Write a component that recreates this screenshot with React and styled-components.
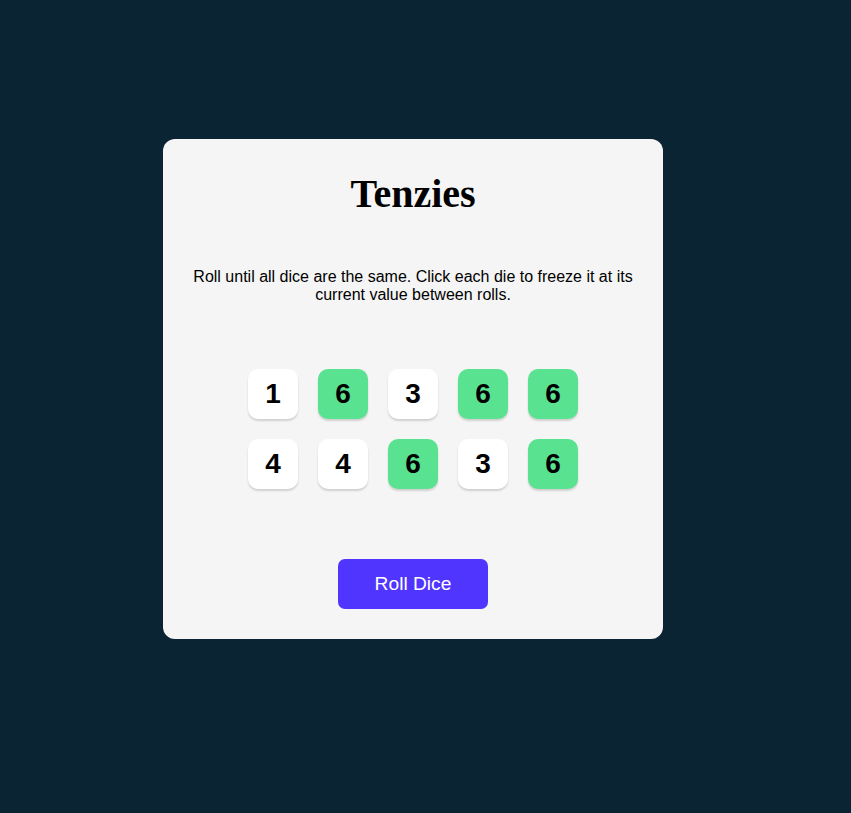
import React, { useState } from "react";
import styled, { createGlobalStyle } from "styled-components";

const GlobalStyle = createGlobalStyle`
  body {
    margin: 0;
    background: #0b2434;
    font-family: "Liberation Sans", Arial, sans-serif;
  }
`;

const Page = styled.div`
  min-height: 100vh;
  padding: 139px 0 0 163px;
  box-sizing: border-box;
`;

const Card = styled.main`
  width: 500px;
  height: 500px;
  box-sizing: border-box;
  background: #f5f5f5;
  border-radius: 12px;
  padding: 31px 30px 30px;
  display: flex;
  flex-direction: column;
  align-items: center;
`;

const Title = styled.h1`
  margin: 0;
  font-family: "Liberation Serif", "Times New Roman", serif;
  font-size: 40px;
  font-weight: 700;
  color: #000;
`;

const Instructions = styled.p`
  margin: 51px 0 0;
  font-size: 16px;
  line-height: 18px;
  text-align: center;
  color: #000;
`;

const DiceGrid = styled.div`
  margin-top: 65px;
  display: grid;
  grid-template-columns: repeat(5, 50px);
  gap: 20px;
`;

const Die = styled.div`
  width: 50px;
  height: 50px;
  border-radius: 10px;
  background: ${(p) => (p.$held ? "#59e391" : "#ffffff")};
  box-shadow: 0 2px 2px rgba(0, 0, 0, 0.15);
  display: flex;
  align-items: center;
  justify-content: center;
  font-size: 28px;
  font-weight: 700;
  color: #000;
  cursor: pointer;
  user-select: none;
`;

const RollButton = styled.button`
  margin-top: 70px;
  width: 150px;
  height: 50px;
  border: none;
  border-radius: 7px;
  background: #5035ff;
  color: #fff;
  font-family: "Liberation Sans", Arial, sans-serif;
  font-size: 19.2px;
  cursor: pointer;
`;

const initialDice = [
  { value: 1, held: false },
  { value: 6, held: true },
  { value: 3, held: false },
  { value: 6, held: true },
  { value: 6, held: true },
  { value: 4, held: false },
  { value: 4, held: false },
  { value: 6, held: true },
  { value: 3, held: false },
  { value: 6, held: true },
];

export default function App() {
  const [dice, setDice] = useState(initialDice);

  const toggle = (i) =>
    setDice((d) => d.map((die, j) => (j === i ? { ...die, held: !die.held } : die)));

  const roll = () =>
    setDice((d) =>
      d.map((die) =>
        die.held ? die : { ...die, value: Math.ceil(Math.random() * 6) }
      )
    );

  return (
    <>
      <GlobalStyle />
      <Page>
        <Card>
          <Title>Tenzies</Title>
          <Instructions>
            Roll until all dice are the same. Click each die to freeze it at its
            current value between rolls.
          </Instructions>
          <DiceGrid>
            {dice.map((die, i) => (
              <Die key={i} $held={die.held} onClick={() => toggle(i)}>
                {die.value}
              </Die>
            ))}
          </DiceGrid>
          <RollButton onClick={roll}>Roll Dice</RollButton>
        </Card>
      </Page>
    </>
  );
}
